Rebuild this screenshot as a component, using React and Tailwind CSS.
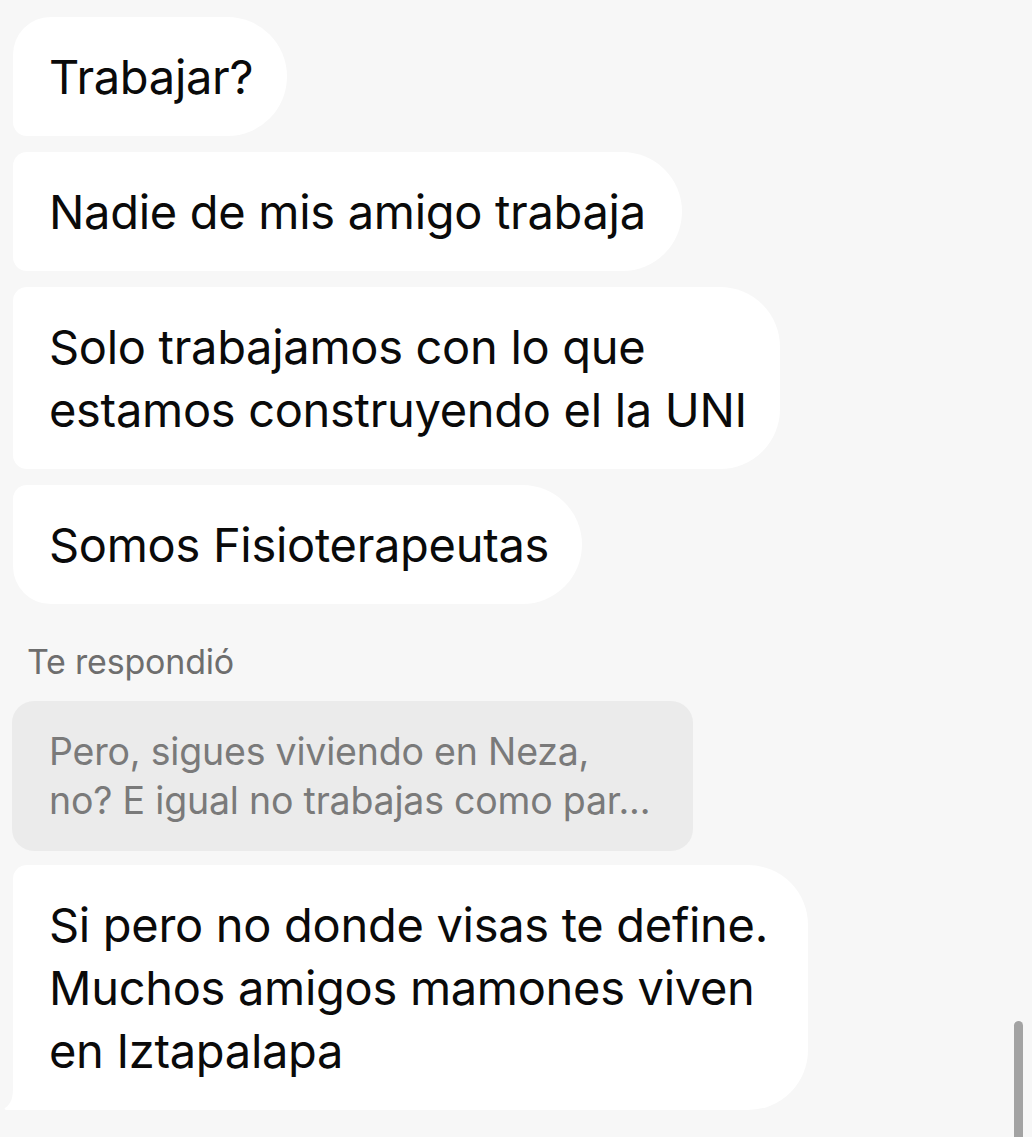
import React from 'react'

const font = { fontFamily: 'Inter, "Liberation Sans", Arial, sans-serif' }

function Bubble({ width, className = '', children }) {
  return (
    <div
      className={`bg-white text-[47px] leading-[63px] tracking-[-0.3px] text-[#0a0a0a] py-[28px] pl-[36px] pr-[24px] whitespace-nowrap ${width} ${className}`}
    >
      {children}
    </div>
  )
}

export default function App() {
  return (
    <div className="relative w-[1032px] h-[1137px] overflow-hidden bg-[#f7f7f7]" style={font}>
      <div className="flex flex-col items-start gap-[16px] pt-[17px] pl-[13px]">
        <Bubble width="w-[274px]" className="rounded-tl-[38px] rounded-bl-[14px] rounded-r-[60px]">
          Trabajar?
        </Bubble>
        <Bubble width="w-[669px]" className="rounded-l-[14px] rounded-r-[60px]">
          Nadie de mis amigo trabaja
        </Bubble>
        <Bubble width="w-[767px]" className="rounded-l-[14px] rounded-r-[60px]">
          Solo trabajamos con lo que
          <br />
          estamos construyendo el la UNI
        </Bubble>
        <Bubble width="w-[569px]" className="rounded-tl-[14px] rounded-bl-[38px] rounded-r-[60px]">
          Somos Fisioterapeutas
        </Bubble>
      </div>

      {/* reply context */}
      <div className="pl-[27px] mt-[36px] text-[34px] leading-[44px] tracking-[-0.2px] text-[#6e6e6e]">Te respondió</div>
      <div className="ml-[12px] mt-[17px] w-[681px] rounded-[22px] bg-[#ebebeb] py-[26px] pl-[37px] pr-[16px] text-[37.5px] leading-[49px] tracking-[-0.2px] text-[#7a7a7a] whitespace-nowrap">
        Pero, sigues viviendo en Neza,
        <br />
        no? E igual no trabajas como par...
      </div>

      <div className="relative ml-[13px] mt-[14px] w-[795px]">
        <Bubble width="w-[795px]" className="rounded-tl-[14px] rounded-bl-[4px] rounded-r-[60px]">
          Si pero no donde visas te define.
          <br />
          Muchos amigos mamones viven
          <br />
          en Iztapalapa
        </Bubble>
        <svg className="absolute -left-[10px] bottom-0" width="16" height="22" viewBox="0 0 16 22">
          <path d="M10 0 C10 10 8 16 2 20 C1 21 2 22 4 22 L16 22 L16 0 Z" fill="#ffffff" />
        </svg>
      </div>

      {/* scroll indicator */}
      <div className="absolute left-[1014px] top-[1021px] w-[9px] h-[140px] rounded-full bg-[#a3a3a3]" />
    </div>
  )
}
